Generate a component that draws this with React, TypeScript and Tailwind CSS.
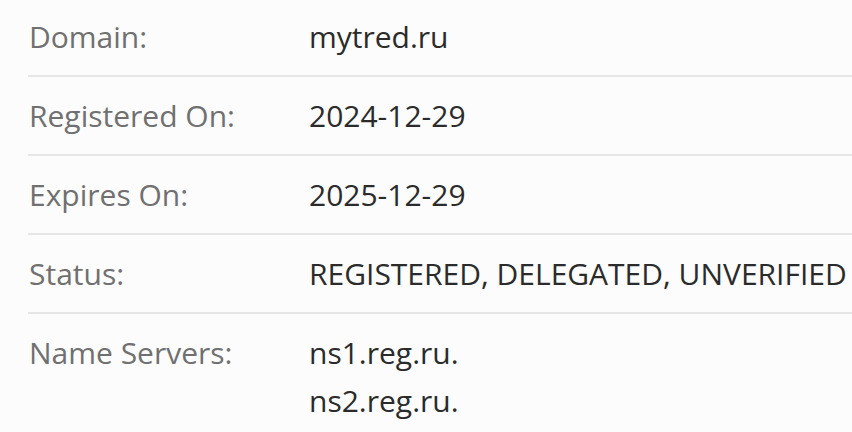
const rows: { label: string; values: string[] }[] = [
  { label: "Domain:", values: ["mytred.ru"] },
  { label: "Registered On:", values: ["2024-12-29"] },
  { label: "Expires On:", values: ["2025-12-29"] },
  { label: "Status:", values: ["REGISTERED, DELEGATED, UNVERIFIED"] },
  { label: "Name Servers:", values: ["ns1.reg.ru.", "ns2.reg.ru."] },
];

export default function App() {
  return (
    <div className="h-[432px] w-full overflow-hidden bg-[#fcfcfc] pl-[28px] font-['Open_Sans',sans-serif] text-[30px] leading-[48px]">
      <div className="-mt-[2px]">
        {rows.map((row, i) => (
          <div
            key={row.label}
            className={`flex pt-[15px] pb-[14px] ${i < rows.length - 1 ? "border-b-2 border-[#e6e6e6]" : ""}`}
          >
            <div className="w-[281px] shrink-0 pl-px text-[#707070]">{row.label}</div>
            <div className="whitespace-nowrap text-[#2b2b2b]">
              {row.values.map((v) => (
                <div key={v}>{v}</div>
              ))}
            </div>
          </div>
        ))}
      </div>
    </div>
  );
}
